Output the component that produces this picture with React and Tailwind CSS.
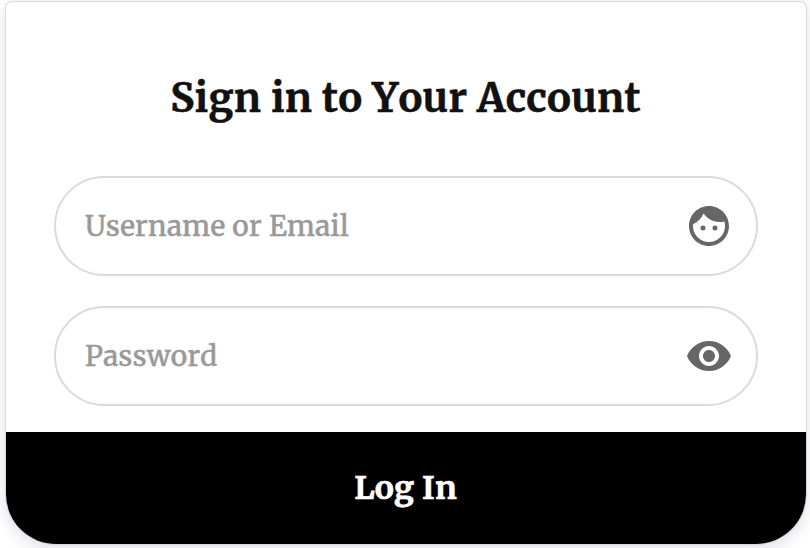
import { MdFace, MdVisibility } from "react-icons/md";

function Field({ label, icon: Icon }) {
  return (
    <div className="flex h-[100px] items-center justify-between rounded-full border-2 border-[#dbdbdb] bg-white pl-[29px] pr-[23px]">
      <span className="whitespace-nowrap text-[28px] leading-10 tracking-[0.34px] text-[#999] [-webkit-text-stroke:0.5px_#999]">
        {label}
      </span>
      <Icon className="size-12 shrink-0 text-[#666]" />
    </div>
  );
}

export default function App() {
  return (
    <div className="h-[548px] w-[810px] overflow-hidden bg-white pl-[6px] pt-[2px] font-['Merriweather','DejaVu_Serif',serif] [font-kerning:none]">
      <div className="flex h-[542px] w-[800px] flex-col overflow-hidden rounded-t-[6px] rounded-b-[50px] bg-white shadow-[0_0_0_1px_#d8d8de,0_4px_16px_rgba(30,30,70,0.15)]">
        <h1 className="mt-[68px] h-14 whitespace-nowrap pr-px text-center text-[40px] font-bold leading-[56px] tracking-[0.27px] text-[#111] [-webkit-text-stroke:0.5px_#111]">
          Sign in to Your Account
        </h1>
        <form className="mt-[50px] flex flex-col gap-[30px] px-12">
          <Field label="Username or Email" icon={MdFace} />
          <Field label="Password" icon={MdVisibility} />
        </form>
        <button
          type="button"
          className="mt-auto h-28 w-full bg-black pr-px text-[32px] font-bold tracking-[0.2px] text-white [-webkit-text-stroke:0.6px_#fff]"
        >
          Log In
        </button>
      </div>
    </div>
  );
}
